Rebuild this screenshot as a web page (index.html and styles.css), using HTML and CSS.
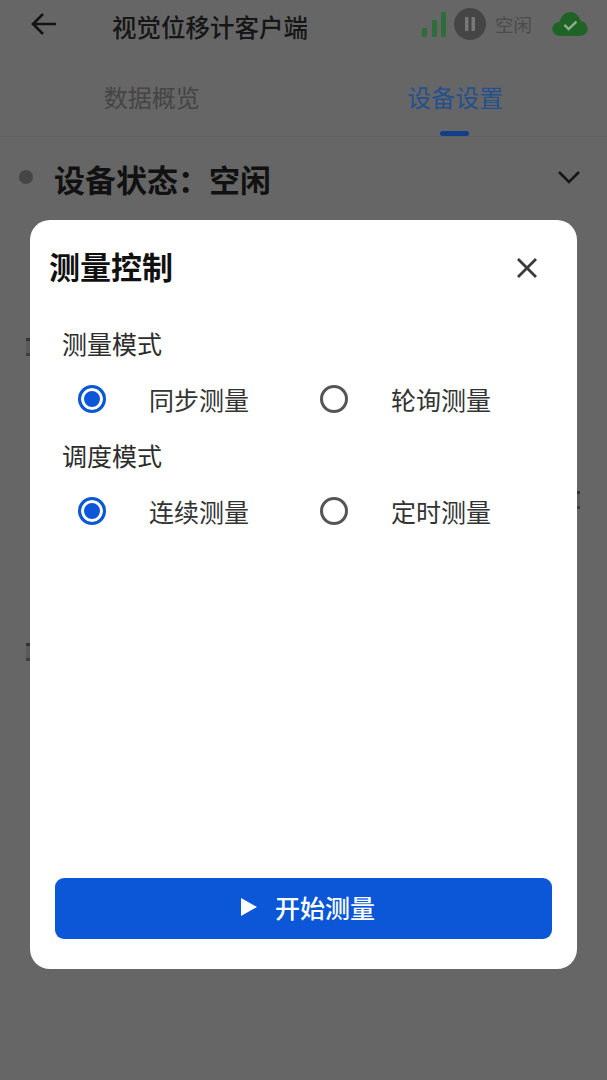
FILE: index.html
```html
<!DOCTYPE html>
<html>
<head>
    <meta name="viewport" content="width=device-width, initial-scale=1.0">
    <title>视觉位移计客户端</title>
    <link rel="stylesheet" href="styles.css">
</head>
<body>
    <div class="topbar">
        <svg class="back-icon" width="28" height="26" viewBox="0 0 28 26">
            <path d="M26 13H3M13 3L3 13l10 10" fill="none" stroke="#141414" stroke-width="2.6"/>
        </svg>
        <div class="app-title">视觉位移计客户端</div>
        <div class="top-status">
            <svg class="signal-icon" width="26" height="27" viewBox="0 0 26 27">
                <rect x="1" y="17" width="5" height="9" fill="#2f6d3a"/>
                <rect x="11" y="9" width="5" height="17" fill="#2f6d3a"/>
                <rect x="20" y="1" width="5" height="25" fill="#2f6d3a"/>
            </svg>
            <svg class="pause-icon" width="32" height="32" viewBox="0 0 32 32">
                <circle cx="16" cy="16" r="16" fill="#454545"/>
                <rect x="11" y="9" width="3.5" height="14" fill="#777"/>
                <rect x="17.5" y="9" width="3.5" height="14" fill="#777"/>
            </svg>
            <span class="idle-text">空闲</span>
            <svg class="cloud-icon" width="38" height="26" viewBox="0 0 38 28">
                <path d="M9 27C4 27 0 24 0 19.500C0 15 3.500 12 8 11.500C9.500 5 14 1 19.500 1C25 1 29 5 30.500 11C35 11.500 38 15 38 19.500C38 24 34 27 29.500 27Z" fill="#1f6426"/>
                <path d="M13 15l4.500 4.500L26 11.500" fill="none" stroke="#8fae92" stroke-width="2.600"/>
            </svg>
        </div>
    </div>

    <div class="tabs">
        <div class="tab">数据概览</div>
        <div class="tab tab-active">设备设置</div>
    </div>

    <div class="device-state">
        <span class="state-dot"></span>
        <span class="state-text">设备状态：空闲</span>
        <svg class="chevron" width="24" height="14" viewBox="0 0 24 14">
            <path d="M2 2l10 10L22 2" fill="none" stroke="#161616" stroke-width="2.600"/>
        </svg>
    </div>

    <!-- rows behind the dialog, only their edges stick out -->
    <div class="under-rows">
        <div class="under-row"><div class="under-stub"></div></div>
        <div class="under-row"><div class="under-stub under-right"></div></div>
        <div class="under-row"><div class="under-stub"></div></div>
    </div>

    <div class="overlay">
        <div class="modal">
            <div class="modal-head">
                <div class="modal-title">测量控制</div>
                <svg class="close-icon" width="22" height="22" viewBox="0 0 22 22">
                    <path d="M2 2l18 18M20 2L2 20" fill="none" stroke="#3a3a3a" stroke-width="2.800"/>
                </svg>
            </div>

            <div class="group-label">测量模式</div>
            <div class="option-row">
                <div class="option"><span class="radio radio-on"></span>同步测量</div>
                <div class="option"><span class="radio"></span>轮询测量</div>
            </div>

            <div class="group-label">调度模式</div>
            <div class="option-row">
                <div class="option"><span class="radio radio-on"></span>连续测量</div>
                <div class="option"><span class="radio"></span>定时测量</div>
            </div>

            <button class="start-btn">
                <span class="play-icon"></span>
                开始测量
            </button>
        </div>
    </div>
</body>
</html>
```

FILE: styles.css
```css
* {
    box-sizing: border-box;
}
body {
    margin: 0;
    height: 1080px;
    overflow: hidden;
    background-color: #666666;
    font-family: "Noto Sans CJK SC", "Noto Sans", sans-serif;
    color: #141414;
}
.topbar {
    display: flex;
    align-items: center;
    height: 48px;
    padding: 0 19px 0 30px;
}
.back-icon {
    margin-right: 54px;
}
.app-title {
    font-size: 24.500px;
    font-weight: 500;
    color: #161616;
    padding-top: 4px;
}
.top-status {
    display: flex;
    align-items: center;
    margin-left: auto;
    margin-right: -1px;
}
.signal-icon {
    margin-right: 7px;
}
.pause-icon {
    margin-right: 9px;
}
.idle-text {
    font-size: 18.500px;
    color: #4b4b4b;
    margin-right: 19px;
}
.tabs {
    display: flex;
    height: 89px;
    border-bottom: 1px solid #5f5f5f;
}
.tab {
    position: relative;
    flex: 1;
    text-align: center;
    font-size: 24px;
    line-height: 36px;
    padding-top: 31px;
    color: #444444;
}
.tab-active {
    color: #24508f;
}
.tab-active::after {
    content: "";
    position: absolute;
    left: 50%;
    bottom: 0;
    width: 29px;
    height: 5px;
    margin-left: -15px;
    border-radius: 3px;
    background-color: #123f8c;
}
.device-state {
    display: flex;
    align-items: center;
    height: 80px;
    padding: 0 26px 0 19px;
}
.state-dot {
    width: 14px;
    height: 14px;
    margin-right: 21px;
    border-radius: 50%;
    background-color: #454545;
}
.state-text {
    font-size: 31px;
    font-weight: 700;
    color: #111111;
    padding-top: 2px;
}
.chevron {
    margin-left: auto;
}
.under-rows {
    padding: 121px 27px 0 26px;
}
.under-row {
    height: 152.500px;
}
.under-stub {
    width: 4px;
    height: 18px;
    border-top: 3px solid #333333;
    border-bottom: 3px solid #3d3d3d;
    background-color: #5a5a5a;
}
.under-right {
    width: 3px;
    margin-left: auto;
}
.overlay {
    position: fixed;
    top: 0;
    left: 0;
    width: 100%;
    height: 100%;
    padding: 220px 30px 0;
}
.modal {
    display: flex;
    flex-direction: column;
    height: 749px;
    padding: 0 25px 30px;
    border-radius: 20px;
    background-color: #ffffff;
}
.modal-head {
    display: flex;
    align-items: center;
    justify-content: space-between;
    height: 94px;
    padding: 0 14px 0 0;
    margin-left: -6px;
}
.modal-title {
    font-size: 31px;
    font-weight: 700;
    color: #111111;
    padding-bottom: 4px;
}
.close-icon {
    margin-top: 2px;
}
.group-label {
    height: 58px;
    padding: 11px 0 0 7px;
    font-size: 25px;
    line-height: 36px;
    color: #2c2c2c;
}
.option-row {
    display: flex;
    align-items: center;
    height: 54px;
    padding-left: 23px;
}
.option {
    display: flex;
    flex-shrink: 0;
    align-items: center;
    width: 242px;
    font-size: 25px;
    color: #333333;
}
.radio {
    width: 28px;
    height: 28px;
    margin-right: 43px;
    border: 3px solid #555555;
    border-radius: 50%;
}
.radio-on {
    border-color: #0b57d8;
    background-color: #0b57d8;
    box-shadow: inset 0 0 0 3px #ffffff;
}
.start-btn {
    display: flex;
    align-items: center;
    justify-content: center;
    margin-top: auto;
    height: 61px;
    padding: 0 0 3px 9px;
    border: none;
    border-radius: 9px;
    background-color: #0b57d8;
    color: #ffffff;
    font-family: inherit;
    font-size: 25px;
    font-weight: 500;
}
.play-icon {
    width: 0;
    height: 0;
    margin-right: 18px;
    border-left: 16px solid #ffffff;
    border-top: 9px solid transparent;
    border-bottom: 9px solid transparent;
}
```
